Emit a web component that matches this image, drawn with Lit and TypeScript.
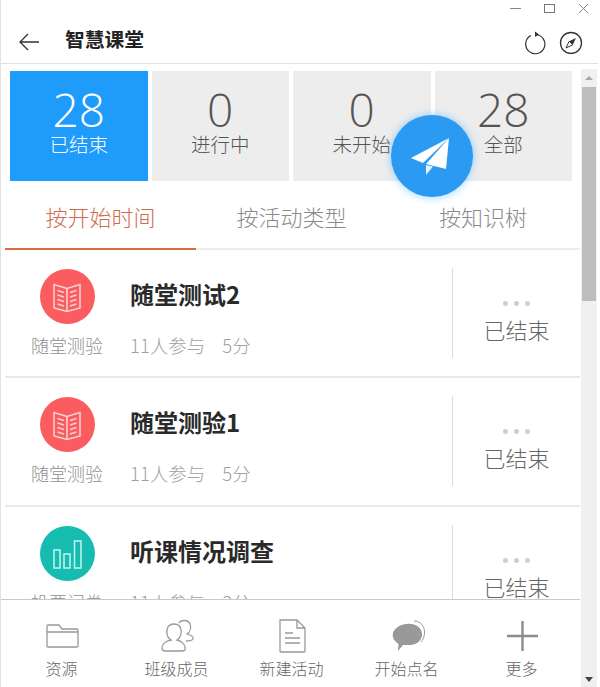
import { LitElement, html, css, svg } from "lit";
import { customElement } from "lit/decorators.js";

const book = html`<svg class="ci" viewBox="0 0 32 32" fill="none" stroke="#fbd3d3" stroke-width="1.5">
  <path d="M16 7.5 L3 3.5 V27 L16 30.5 L29 27 V3.5 Z M16 7.5 V30.5"/>
  <path d="M6.5 9.5 L13 11.5 M6.5 14 L13 16 M6.5 18.5 L13 20.5 M6.5 23 L13 25 M25.5 9.5 L19 11.5 M25.5 14 L19 16 M25.5 18.5 L19 20.5 M25.5 23 L19 25"/>
</svg>`;
const bars = html`<svg class="ci" viewBox="0 0 32 32" fill="none" stroke="#c5f5f0" stroke-width="1.5">
  <rect x="3" y="12" width="6" height="18"/><rect x="13" y="16" width="6" height="14"/><rect x="23.5" y="3" width="6.5" height="27"/>
</svg>`;

const rows = [
  { icon: book, tone: "red", label: "随堂测验", title: "随堂测试2", meta: "11人参与", score: "5分" },
  { icon: book, tone: "red", label: "随堂测验", title: "随堂测验1", meta: "11人参与", score: "5分" },
  { icon: bars, tone: "teal", label: "投票问卷", title: "听课情况调查", meta: "11人参与", score: "3分" },
];
const stats = [
  { n: "28", l: "已结束", on: true },
  { n: "0", l: "进行中", on: false },
  { n: "0", l: "未开始", on: false },
  { n: "28", l: "全部", on: false },
];
const tabs = ["按开始时间", "按活动类型", "按知识树"];
const folderI = svg`<path d="M3 8.5 V28 Q3 29 4 29 H33 Q34 29 34 28 V12 Q34 11 33 11 H18 L15 7 H4 Q3 7 3 8.5 Z M3 14 H34"/>`;
const peopleI = svg`<path d="M15 6 C9 6 7 11 8 16 C8.5 19 10 21 12 22 C7 23 3 26 3 30 Q3 33 6 33 H23 Q27 33 26 29 C25.5 26 22 23 18 22 C21 20 22.5 16 22 12 C21.5 8 19 6 15 6 Z"/><path d="M20 5 C22 1.5 29 1.5 31 6 C32.5 10 31 14 28 16 C31 17 35 18 34 21 C33 23 29 23 27 23"/>`;
const docI = svg`<path d="M6 2 H23 L31 10 V33 Q31 34 30 34 H7 Q6 34 6 33 Z M23 2 V10 H31"/><path d="M11 15 H19 M11 20 H26 M11 25 H26"/>`;
const tools = [
  { l: "资源", i: folderI },
  { l: "班级成员", i: peopleI },
  { l: "新建活动", i: docI },
  { l: "开始点名", i: null },
  { l: "更多", i: null },
];

@customElement("app-root")
export class AppRoot extends LitElement {
  static styles = css`
    :host { display: block; width: 600px; height: 687px; overflow: hidden; background: #fff; color: #555;
      font-family: "Noto Sans CJK SC", "Noto Sans", sans-serif; font-weight: 300; }
    .win { position: relative; box-sizing: border-box; width: 598px; height: 687px; border-left: 1px solid #e2e2e2; display: flex; flex-direction: column; }
    .ctl { height: 14px; display: flex; justify-content: flex-end; gap: 22px; padding: 4px 8px 0 0; box-sizing: border-box; flex: none; overflow: hidden; }
    .ctl svg { width: 12px; height: 12px; display: block; }
    .head { height: 50px; box-sizing: border-box; border-bottom: 1px solid #dfdfdf; display: flex; align-items: center; padding: 0 15px 0 18px; flex: none; }
    .back { width: 21px; height: 18px; margin-top: 7px; }
    .title { margin-left: 25px; font-size: 19.8px; font-weight: 700; color: #222; flex: 1; line-height: 48px; margin-top: 1px; }
    .hi { width: 24px; height: 24px; margin-left: 12px; margin-top: 8px; }
    .hi.c { margin-top: 7px; }
    .main { flex: 1; display: flex; min-height: 0; }
    .content { width: 579px; flex: none; display: flex; flex-direction: column; min-height: 0; }
    .stats { display: grid; grid-template-columns: repeat(4, 137.5px); column-gap: 4px; padding: 7px 0 0 9px; flex: none; }
    .stat { height: 110px; background: #eeeded; display: flex; flex-direction: column; align-items: center; color: #555; }
    .stat.on { background: #1e9bfb; color: #fff; }
    .n { font-family: "Open Sans", sans-serif; font-weight: 300; font-size: 46px; line-height: 44px; margin-top: 16px; }
    .l { font-size: 19.5px; line-height: 26px; }
    .tabs { display: grid; grid-template-columns: 191px 191px 192px; height: 69px; margin-left: 4px; border-bottom: 2px solid #ececec; flex: none; box-sizing: border-box; }
    .tab { display: flex; align-items: center; justify-content: center; font-size: 22px; color: #8a8a8a; margin-bottom: -2px; padding-top: 2px; box-sizing: border-box; border-bottom: 2px solid transparent; }
    .tab.on { color: #cf6b4d; border-bottom-color: #dd6a45; }
    .list { flex: 1; min-height: 0; overflow: hidden; margin-left: 4px; }
    .row { height: 128px; box-sizing: border-box; border-bottom: 2px solid #e9e9e9; display: flex; }
    .row + .row { height: 129px; }
    .row:nth-child(3) { border: 0; }
    .left { width: 124px; flex: none; display: flex; flex-direction: column; align-items: center; padding-top: 19px; box-sizing: border-box; }
    .circle { width: 55px; height: 55px; border-radius: 50%; display: flex; align-items: center; justify-content: center; }
    .circle.red { background: #fb5c5f; }
    .circle.teal { background: #17bcb0; }
    .ci { width: 32px; height: 32px; }
    .lab { font-size: 18px; color: #8f8f8f; line-height: 26px; margin-top: 8px; }
    .mid { flex: 1; display: flex; flex-direction: column; padding: 26px 0 0 1px; box-sizing: border-box; }
    .t { font-size: 24px; font-weight: 700; color: #2a2a2a; line-height: 36px; }
    .m { font-size: 18.5px; color: #a0a0a0; line-height: 26px; margin-top: 20px; display: flex; gap: 17px; }
    .end { width: 127px; flex: none; margin-top: 18px; height: 90px; border-left: 1px solid #dcdcdc; display: flex; flex-direction: column; align-items: center; }
    .dots { display: flex; gap: 6px; margin-top: 33px; }
    .dots i { width: 5px; height: 5px; border-radius: 50%; background: #cfcfcf; }
    .st { font-size: 22px; color: #666; line-height: 32px; margin-top: 6.5px; }
    .foot { height: 88px; flex: none; border-top: 1px solid #c9c9c9; box-sizing: border-box; display: grid; grid-template-columns: repeat(5, 115px); padding-left: 3px; background: #fff; }
    .tool { display: flex; flex-direction: column; align-items: center; padding-top: 18px; box-sizing: border-box; }
    .tool svg { width: 36px; height: 36px; display: block; }
    .tool span { font-size: 16px; color: #666; line-height: 22px; margin-top: 3px; }
    .bar { width: 16px; margin-left: 1px; flex: none; background: #f0f0f0; display: flex; flex-direction: column; align-items: center; position: relative; margin-top: 5px; }
    .thumb { width: 14px; height: 214px; background: #bdbdbd; margin-top: 18px; }
    .up, .down { width: 0; height: 0; border-left: 4px solid transparent; border-right: 4px solid transparent; }
    .up { border-bottom: 4px solid #a8a8a8; position: absolute; top: 7px; }
    .down { border-top: 5px solid #444; position: absolute; bottom: 5px; }
    .fab { position: absolute; left: 390px; top: 115px; width: 82px; height: 82px; border-radius: 50%; background: #2b9af3; box-shadow: 0 0 8px rgba(70, 180, 255, .6); display: flex; align-items: center; justify-content: center; }
    .fab svg { width: 82px; height: 82px; }
  `;

  render() {
    return html`<div class="win">
      <div class="ctl">
        <svg viewBox="0 0 12 12" fill="none" stroke="#888" stroke-width="1"><path d="M0 4.5 H11"/></svg>
        <svg viewBox="0 0 12 12" fill="none" stroke="#777" stroke-width="1"><rect x=".5" y=".5" width="10" height="8"/></svg>
        <svg viewBox="0 0 12 12" fill="none" stroke="#888" stroke-width="1"><path d="M1 0 L10 9 M10 0 L1 9"/></svg>
      </div>
      <div class="head">
        <svg class="back" viewBox="0 0 21 18" fill="none" stroke="#333" stroke-width="1.3"><path d="M20 9 H1 M9 1 L1 9 L9 17"/></svg>
        <div class="title">智慧课堂</div>
        <svg class="hi" viewBox="0 0 24 24" fill="none" stroke="#333" stroke-width="1.2"><path d="M8 4.5 A9.6 9.6 0 1 0 12.5 3.5"/><path d="M12 0.5 L16 3.5 L12 6 Z" fill="#333" stroke="none"/></svg>
        <svg class="hi c" viewBox="0 0 24 24" fill="none" stroke="#333" stroke-width="1.3"><circle cx="12" cy="13" r="10.5"/><path d="M17 8 L13.8 14.8 L10.2 11.2 Z" fill="#333" stroke="none"/><path d="M7 18 L10.2 11.2 L13.8 14.8 Z" fill="#fff" stroke="#333" stroke-width="1"/></svg>
      </div>
      <div class="main">
        <div class="content">
          <div class="stats">${stats.map((s) => html`<div class="stat ${s.on ? "on" : ""}"><div class="n">${s.n}</div><div class="l">${s.l}</div></div>`)}</div>
          <div class="tabs">${tabs.map((t, i) => html`<div class="tab ${i === 0 ? "on" : ""}">${t}</div>`)}</div>
          <div class="list">${rows.map((r) => html`<div class="row">
            <div class="left"><div class="circle ${r.tone}">${r.icon}</div><div class="lab">${r.label}</div></div>
            <div class="mid"><div class="t">${r.title}</div><div class="m"><span>${r.meta}</span><span>${r.score}</span></div></div>
            <div class="end"><div class="dots"><i></i><i></i><i></i></div><div class="st">已结束</div></div>
          </div>`)}</div>
          <div class="foot">${tools.map((t, i) => html`<div class="tool">
            <svg viewBox="0 0 36 36" fill="none" stroke="#999" stroke-width="1.3">
              ${t.i ? t.i : i === 3
                ? svg`<path d="M22 6 C28 6 34 11 33 18 C32 23 27 27 21 27 L14 27 L9 33 L9.5 26 C5 23 3 19 4 15 C6 9 14 5 22 6 Z" fill="#999" stroke="none"/><path d="M25 3 C32 3 36 9 35.5 15 C35.3 19 34 22 32 24" stroke-width="1"/>`
                : svg`<path d="M18.5 3 V33 M3 18 H34" stroke="#8c8c8c" stroke-width="2.4"/>`}
            </svg>
            <span>${t.l}</span>
          </div>`)}</div>
        </div>
        <div class="bar"><div class="up"></div><div class="thumb"></div><div class="down"></div></div>
      </div>
      <div class="fab">
        <svg viewBox="0 0 82 82">
          <path d="M58 23 L20 43 L32 48 Z" fill="#fff"/>
          <path d="M58 23 L35 49 L55 54 Z" fill="#fff"/>
          <path d="M35 50 L35 60 L42 51.5 Z" fill="#e4f2ff"/>
        </svg>
      </div>
    </div>`;
  }
}
